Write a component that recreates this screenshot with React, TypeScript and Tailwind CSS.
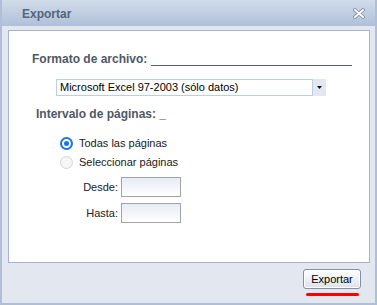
import React from "react";

function Radio({ checked }: { checked: boolean }) {
  if (checked) {
    return (
      <span className="flex h-[13px] w-[13px] items-center justify-center rounded-full border-2 border-[#1a73e8] bg-white">
        <span className="h-[5px] w-[5px] rounded-full bg-[#1a73e8]" />
      </span>
    );
  }
  return <span className="h-[13px] w-[13px] rounded-full border border-[#d4d4d4] bg-[#f6f6f6]" />;
}

function Field({ label }: { label: string }) {
  return (
    <div className="flex items-center">
      <span className="w-[112px] pr-[3px] text-right text-[11px] text-[#222]">{label}</span>
      <div className="h-[20px] w-[60px] border border-[#a3a3a3] bg-gradient-to-b from-[#e6ecf5] to-white" />
    </div>
  );
}

export default function App() {
  return (
    <div className="flex h-[305px] w-[377px] flex-col border-x-2 border-b-2 border-[#b0bfd6] bg-[#e2e7f0] font-['Liberation_Sans',Arial,sans-serif]">
      {/* title bar */}
      <div className="flex h-[26px] items-center justify-between bg-gradient-to-b from-[#d2dcea] to-[#afc0d9] pl-[20px] pr-[10px] pt-[1px]">
        <span className="text-[12px] font-bold text-[#55647a]">Exportar</span>
        <svg width="12" height="11" viewBox="0 0 12 11">
          <path d="M2 2 L10 9 M10 2 L2 9" stroke="#8794aa" strokeWidth="3.6" strokeLinecap="square" />
          <path d="M2 2 L10 9 M10 2 L2 9" stroke="#fff" strokeWidth="1.8" strokeLinecap="square" />
        </svg>
      </div>

      {/* panel */}
      <div className="ml-[6px] mt-[4px] flex h-[233px] w-[362px] flex-col border border-[#a2b4cf] bg-white">
        <div className="flex items-start pl-[23px] pt-[20px]">
          <span className="text-[12px] font-bold leading-4 text-[#4f5867]">Formato de archivo:</span>
          <div className="ml-[4px] mt-[14px] h-px w-[201px] bg-[#5b6068]" />
        </div>

        <div className="ml-[47px] mt-[12px] flex h-[17px]">
          <div className="flex w-[257px] items-center border border-[#bccde6] pl-[3px] text-[11px] text-black">
            Microsoft Excel 97-2003 (sólo datos)
          </div>
          <div className="flex w-[13px] items-center justify-center bg-[#e2e7f0]">
            <svg width="5" height="3" viewBox="0 0 5 3">
              <path d="M0 0 H5 L2.5 3 Z" fill="#111" />
            </svg>
          </div>
        </div>

        <div className="mt-[10px] pl-[27px] text-[12px] font-bold leading-4 text-[#4f5867]">
          Intervalo de páginas: _
        </div>

        <div className="ml-[51px] mt-[12px] flex flex-col">
          <div className="flex h-[19px] items-center gap-[6px]">
            <Radio checked />
            <span className="text-[11px] text-[#1a1a1a]">Todas las páginas</span>
          </div>
          <div className="flex h-[19px] items-center gap-[6px]">
            <Radio checked={false} />
            <span className="text-[11px] text-[#1a1a1a]">Seleccionar páginas</span>
          </div>
        </div>

        <div className="mt-[5px] flex flex-col gap-[6px]">
          <Field label="Desde:" />
          <Field label="Hasta:" />
        </div>
      </div>

      {/* footer */}
      <div className="mr-[14px] mt-[6px] flex justify-end">
        <div className="flex flex-col items-center">
          <button className="h-[20px] w-[58px] rounded-[3px] border border-[#858fa6] bg-gradient-to-b from-white to-[#dce1eb] text-[11px] text-black shadow-[inset_0_0_0_1px_#fff]">
            Exportar
          </button>
          <div className="mt-[4px] h-[3px] w-[53px] rounded-full bg-[#ff0000]" />
        </div>
      </div>
    </div>
  );
}
